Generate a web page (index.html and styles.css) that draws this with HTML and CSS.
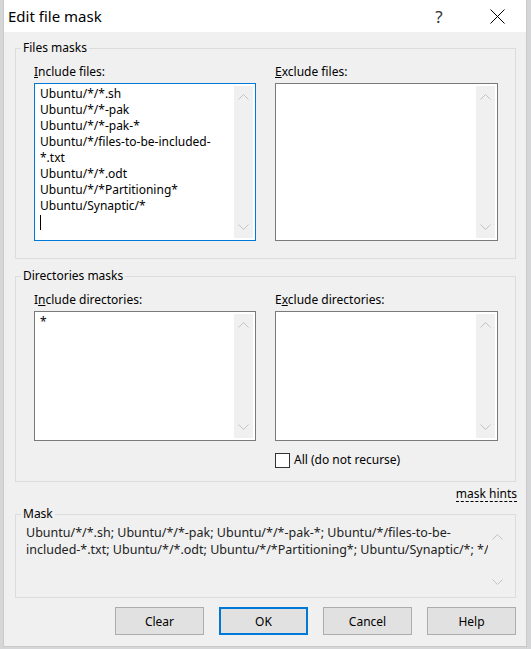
FILE: index.html
```html
<!DOCTYPE html>
<html lang="en">
<head>
    <meta charset="UTF-8">
    <title>Edit file mask</title>
    <link rel="stylesheet" href="styles.css">
</head>
<body>
    <div class="dialog">
        <div class="titlebar">
            <span class="title">Edit file mask</span>
            <span class="caption-btn help">?</span>
            <span class="caption-btn close">
                <svg width="15" height="15" viewBox="0 0 15 15"><path d="M0.5 0.5 L14.5 14.5 M14.5 0.5 L0.5 14.5" stroke="#000" stroke-width="1" fill="none"/></svg>
            </span>
        </div>

        <div class="content">
            <fieldset class="group files">
                <legend>Files masks</legend>
                <div class="group-body cols">
                    <div class="col">
                        <label><u>I</u>nclude files:</label>
                        <div class="listbox focused tall">
                            <div class="lines">
                                <div>Ubuntu/*/*.sh</div>
                                <div>Ubuntu/*/*-pak</div>
                                <div>Ubuntu/*/*-pak-*</div>
                                <div>Ubuntu/*/files-to-be-included-</div>
                                <div>*.txt</div>
                                <div>Ubuntu/*/*.odt</div>
                                <div>Ubuntu/*/*Partitioning*</div>
                                <div>Ubuntu/Synaptic/*</div>
                                <div><span class="caret"></span></div>
                            </div>
                            <div class="scroll">
                                <svg width="11" height="6" viewBox="0 0 11 6"><polyline points="0.5,5.5 5.5,0.5 10.5,5.5" fill="none" stroke="#c2c2c2"/></svg>
                                <svg width="11" height="6" viewBox="0 0 11 6"><polyline points="0.5,0.5 5.5,5.5 10.5,0.5" fill="none" stroke="#c2c2c2"/></svg>
                            </div>
                        </div>
                    </div>
                    <div class="col">
                        <label><u>E</u>xclude files:</label>
                        <div class="listbox tall">
                            <div class="lines"></div>
                            <div class="scroll">
                                <svg width="11" height="6" viewBox="0 0 11 6"><polyline points="0.5,5.5 5.5,0.5 10.5,5.5" fill="none" stroke="#c2c2c2"/></svg>
                                <svg width="11" height="6" viewBox="0 0 11 6"><polyline points="0.5,0.5 5.5,5.5 10.5,0.5" fill="none" stroke="#c2c2c2"/></svg>
                            </div>
                        </div>
                    </div>
                </div>
            </fieldset>

            <fieldset class="group dirs">
                <legend>Directories masks</legend>
                <div class="group-body cols">
                    <div class="col">
                        <label>I<u>n</u>clude directories:</label>
                        <div class="listbox short">
                            <div class="lines">
                                <div>*</div>
                            </div>
                            <div class="scroll">
                                <svg width="11" height="6" viewBox="0 0 11 6"><polyline points="0.5,5.5 5.5,0.5 10.5,5.5" fill="none" stroke="#c2c2c2"/></svg>
                                <svg width="11" height="6" viewBox="0 0 11 6"><polyline points="0.5,0.5 5.5,5.5 10.5,0.5" fill="none" stroke="#c2c2c2"/></svg>
                            </div>
                        </div>
                    </div>
                    <div class="col">
                        <label>E<u>x</u>clude directories:</label>
                        <div class="listbox short">
                            <div class="lines"></div>
                            <div class="scroll">
                                <svg width="11" height="6" viewBox="0 0 11 6"><polyline points="0.5,5.5 5.5,0.5 10.5,5.5" fill="none" stroke="#c2c2c2"/></svg>
                                <svg width="11" height="6" viewBox="0 0 11 6"><polyline points="0.5,0.5 5.5,5.5 10.5,0.5" fill="none" stroke="#c2c2c2"/></svg>
                            </div>
                        </div>
                        <div class="check">
                            <span class="box"></span>
                            <span>All (do not recurse)</span>
                        </div>
                    </div>
                </div>
            </fieldset>

            <div class="hints-row">
                <span class="hints">mask hints</span>
            </div>

            <fieldset class="group mask">
                <legend>Mask</legend>
                <div class="group-body mask-body">
                    <div class="mask-text">
                        <div>Ubuntu/*/*.sh; Ubuntu/*/*-pak; Ubuntu/*/*-pak-*; Ubuntu/*/files-to-be-</div>
                        <div>included-*.txt; Ubuntu/*/*.odt; Ubuntu/*/*Partitioning*; Ubuntu/Synaptic/*; */</div>
                    </div>
                    <div class="scroll mask-scroll">
                        <svg width="11" height="6" viewBox="0 0 11 6"><polyline points="0.5,5.5 5.5,0.5 10.5,5.5" fill="none" stroke="#c2c2c2"/></svg>
                        <svg width="11" height="6" viewBox="0 0 11 6"><polyline points="0.5,0.5 5.5,5.5 10.5,0.5" fill="none" stroke="#c2c2c2"/></svg>
                    </div>
                </div>
            </fieldset>

            <div class="buttons">
                <button type="button">Clear</button>
                <button type="button" class="default">OK</button>
                <button type="button">Cancel</button>
                <button type="button">Help</button>
            </div>
        </div>
    </div>
</body>
</html>
```

FILE: styles.css
```css
/* desktop behind the dialog */
body {
    margin: 0;
    background-color: #d4d6d8;
    font-family: "Noto Sans", "DejaVu Sans", sans-serif;
    font-size: 12px;
    color: #000;
}

.dialog {
    margin-left: 3px;
    width: 524px;
    height: 647px;
    box-sizing: border-box;
    background-color: #f0f0f0;
    border-left: 1px solid #c9c9c9;
    border-right: 1px solid #c9c9c9;
    border-bottom: 1px solid #c9c9c9;
}

.titlebar {
    height: 32px;
    background-color: #fff;
    display: flex;
    align-items: center;
}
.title {
    flex: 1;
    padding-left: 4px;
    font-size: 15px;
}
.caption-btn {
    width: 58px;
    display: flex;
    justify-content: center;
    align-items: center;
}
.help {
    font-size: 17px;
    color: #333;
}

.content {
    padding: 8px 10px 0 11px;
}

/* group boxes */
.group {
    margin: 0;
    padding: 0;
    border: 1px solid #dcdcdc;
    min-width: 0;
}
.group legend {
    margin-left: 5px;
    padding: 0 2px;
    line-height: 16px;
}
.group-body {
    padding: 8px 17px 17px 18px;
}
.dirs {
    margin-top: 9px;
}
.dirs .group-body {
    padding-bottom: 13px;
}

.cols {
    display: grid;
    grid-template-columns: 222px 223px;
    column-gap: 19px;
}
.col label {
    display: block;
    line-height: 16px;
    margin-bottom: 3px;
}

.listbox {
    display: flex;
    background-color: #fff;
    border: 1px solid #7a7a7a;
    box-sizing: border-box;
}
.listbox.focused {
    border-color: #0078d7;
}
.listbox.tall {
    height: 158px;
}
.listbox.short {
    height: 130px;
}
.lines {
    flex: 1;
    padding: 2px 5px;
    line-height: 16px;
    overflow: hidden;
}
.lines div,
.mask-text div {
    white-space: pre;
}
.caret {
    display: inline-block;
    width: 1px;
    height: 15px;
    background-color: #000;
    vertical-align: middle;
}

.scroll {
    width: 19px;
    margin: 2px 2px 2px 0;
    background-color: #f0f0f0;
    display: flex;
    flex-direction: column;
    justify-content: space-between;
    align-items: center;
    padding: 8px 0;
    box-sizing: border-box;
}

.check {
    display: flex;
    align-items: center;
    margin-top: 11px;
    line-height: 16px;
}
.check .box {
    width: 13px;
    height: 13px;
    border: 1px solid #333;
    background-color: #fff;
    margin-right: 4px;
}

.hints-row {
    display: flex;
    justify-content: flex-end;
    margin-top: 5px;
    line-height: 16px;
}
.hints {
    border-bottom: 1px dashed #000;
    line-height: 14px;
    margin-right: -1px;
}

.mask {
    margin-top: 4px;
}
.mask-body {
    display: flex;
    height: 75px;
    box-sizing: border-box;
    padding: 2px 8px 0 10px;
}
.mask-text {
    flex: 1;
    font-size: 12.5px;
    line-height: 17px;
    overflow: hidden;
    color: #222;
}
.mask-scroll {
    background-color: transparent;
    margin: 0 0 6px 0;
    padding: 10px 0 6px;
}

/* dialog buttons */
.buttons {
    display: flex;
    justify-content: flex-end;
    gap: 15px;
    margin-top: 9px;
}
button {
    width: 89px;
    height: 28px;
    background-color: #e1e1e1;
    border: 1px solid #adadad;
    font-family: inherit;
    font-size: 12px;
    color: #000;
    padding: 0;
}
button.default {
    border: 2px solid #0078d7;
}
```
